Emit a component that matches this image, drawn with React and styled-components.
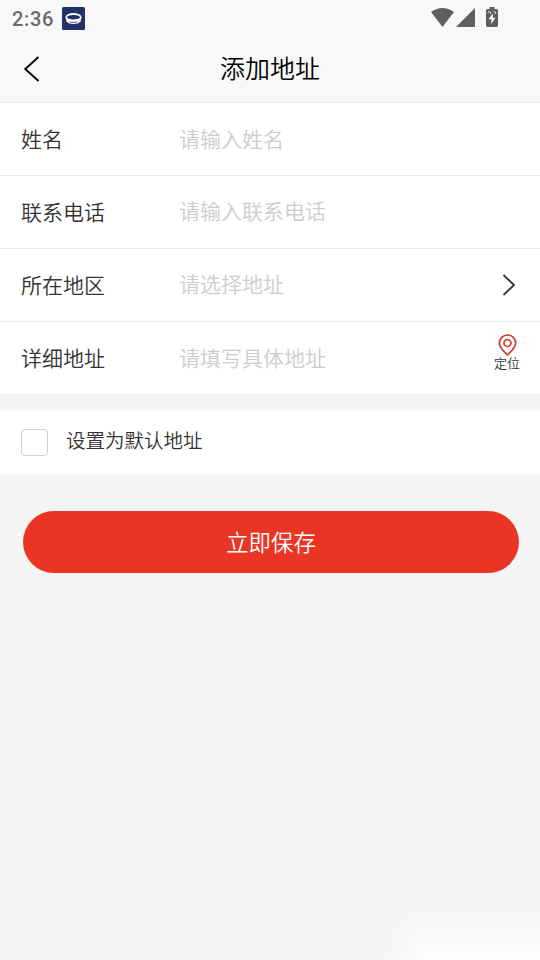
import { useState } from 'react';
import styled, { createGlobalStyle } from 'styled-components';

const campos = [
    { id: 'nombre', etiqueta: '姓名', placeholder: '请输入姓名' },
    { id: 'telefono', etiqueta: '联系电话', placeholder: '请输入联系电话' },
    { id: 'zona', etiqueta: '所在地区', placeholder: '请选择地址', accion: 'elegir' },
    { id: 'detalle', etiqueta: '详细地址', placeholder: '请填写具体地址', accion: 'ubicar' },
];

function IconosSistema(){
    return (
        <svg width="68" height="22" viewBox="431 7 68 22" fill="#5f5f5f">
            <path d="M431 12 Q442.5 4 454 12 L442.5 27 Z" />
            <path d="M475 8 V27 H456 Z" />
            <path d="M489.5 9 V7 H494.5 V9 H496.5 Q498 9 498 10.500 V25.500 Q498 27 496.500 27 H487.500 Q486 27 486 25.500 V10.500 Q486 9 487.500 9 Z" />
            <path d="M492.800 13.500 L488.500 19.300 H491.300 V24 L495.500 17.800 H492.800 Z" fill="#f8f8f8" />
            <path d="M488.300 13 V11.800 H490.500 V14 M493.500 11.800 H495.500 V14" fill="none" stroke="#dcdcdc" strokeWidth="0.900" />
        </svg>
    )
}

function IconoApp(){
    return (
        <svg width="23" height="23" viewBox="0 0 23 23">
            <rect width="23" height="23" rx="1.500" fill="#22316a" />
            <path d="M3.500 10 L4.500 14.500 Q6.500 17 11.500 17 Q16.500 17 18.500 14.500 L19.500 10 Z" fill="#fff" />
            <ellipse cx="11.500" cy="10.300" rx="8" ry="4.200" fill="#fff" />
            <ellipse cx="11.500" cy="10.200" rx="6.300" ry="2.300" fill="#22316a" />
            <path d="M7.500 15 Q11.500 15.800 15.500 15" fill="none" stroke="#22316a" strokeWidth="0.800" />
        </svg>
    )
}

function IconoPin(){
    return (
        <svg width="20" height="22" viewBox="0 0 20 22" fill="none" stroke="#cf3a2e" strokeWidth="1.700">
            <path d="M10.500 21 C7.500 18 2.300 13.800 2.300 9 A8.200 8 0 0 1 18.700 9 C18.700 13.800 13.500 18 10.500 21 Z" />
            <circle cx="10.500" cy="9" r="3.500" />
        </svg>
    )
}

function App(){
    const [valores, setValores] = useState({});
    const [porDefecto, setPorDefecto] = useState(false);

    return (
        <>
            <EstilosGlobales />
            <Pantalla>
                <BarraEstado>
                    <Hora>2:36</Hora>
                    <IconoApp />
                    <Sistema><IconosSistema /></Sistema>
                </BarraEstado>
                <Cabecera>
                    <BotonVolver aria-label="返回">
                        <svg width="18" height="28" viewBox="0 0 18 28" fill="none" stroke="#000" strokeWidth="1.800">
                            <path d="M16.500 2 L3.200 14 L16.500 26" />
                        </svg>
                    </BotonVolver>
                    <Titulo>添加地址</Titulo>
                </Cabecera>
                <Lista>
                    {campos.map((campo) => (
                        <Fila key={campo.id}>
                            <Etiqueta htmlFor={campo.id}>{campo.etiqueta}</Etiqueta>
                            <Entrada
                                id={campo.id}
                                placeholder={campo.placeholder}
                                readOnly={campo.accion === 'elegir'}
                                $subir={campo.id === 'telefono' || campo.id === 'zona'}
                                value={valores[campo.id] || ''}
                                onChange={(e) => setValores({ ...valores, [campo.id]: e.target.value })}
                            />
                            {campo.accion === 'elegir' && (
                                <Flecha width="14" height="24" viewBox="0 0 14 24">
                                    <path d="M1.500 2 L12 12 L1.500 22" />
                                </Flecha>
                            )}
                            {campo.accion === 'ubicar' && (
                                <BotonUbicar>
                                    <IconoPin />
                                    定位
                                </BotonUbicar>
                            )}
                        </Fila>
                    ))}
                </Lista>
                <FilaDefecto>
                    <Casilla
                        type="checkbox"
                        checked={porDefecto}
                        onChange={(e) => setPorDefecto(e.target.checked)}
                    />
                    <TextoDefecto>设置为默认地址</TextoDefecto>
                </FilaDefecto>
                <BotonGuardar>立即保存</BotonGuardar>
                <Brillo />
            </Pantalla>
        </>
    )
}

export default App

const EstilosGlobales = createGlobalStyle`
    * {
        box-sizing: border-box;
    }
    body {
        margin: 0;
        background: #f5f5f5;
    }
    body, input, button {
        font-family: "Noto Sans CJK SC", sans-serif;
        font-weight: 350;
    }
`

const Pantalla = styled.div`
    display: flex;
    flex-direction: column;
    width: 540px;
    height: 960px;
    overflow: hidden;
    background: #f5f5f5;
`

const BarraEstado = styled.div`
    display: flex;
    align-items: center;
    height: 36px;
    padding: 0 41px 0 12px;
    background: #f8f8f8;
`

const Hora = styled.span`
    width: 50px;
    font: 500 20px/24px Roboto, sans-serif;
    letter-spacing: 0.7px;
    color: #6c6c6c;
    padding-top: 2px;
`

const Sistema = styled.div`
    display: flex;
    margin-left: auto;
`

const Cabecera = styled.header`
    display: grid;
    grid-template-columns: 60px 1fr 60px;
    align-items: center;
    height: 67px;
    background: #f8f8f8;
    border-bottom: 1px solid #ececec;
`

const BotonVolver = styled.button`
    display: flex;
    padding: 0 0 0 22px;
    border: 0;
    background: none;
    cursor: pointer;
`

const Titulo = styled.h1`
    margin: 0 0 5px;
    font-size: 25px;
    line-height: 36px;
    font-weight: 350;
    text-align: center;
    color: #000;
`

const Lista = styled.div`
    background: #fff;
`

const Fila = styled.div`
    display: flex;
    align-items: center;
    height: 73px;
    padding: 0 20px 0 21px;
    border-bottom: 1px solid #ebebeb;
    &:last-child {
        height: 72px;
        border-bottom: 0;
    }
`

const Etiqueta = styled.label`
    width: 158px;
    margin-bottom: 2px;
    font-size: 21px;
    line-height: 30px;
    color: #333;
`

const Entrada = styled.input`
    flex: 1;
    min-width: 0;
    height: 30px;
    padding: 0;
    margin-bottom: ${(props) => (props.$subir ? '4px' : '2px')};
    border: 0;
    outline: none;
    background: none;
    font-size: 21px;
    color: #333;
    &::placeholder {
        color: #ccc;
    }
`

const Flecha = styled.svg`
    margin-right: 4px;
    fill: none;
    stroke: #333;
    stroke-width: 1.8;
`

const BotonUbicar = styled.button`
    display: flex;
    flex-direction: column;
    align-items: center;
    padding: 0;
    margin-bottom: 12px;
    border: 0;
    background: none;
    font-size: 13px;
    line-height: 14px;
    color: #333;
    cursor: pointer;
`

const FilaDefecto = styled.label`
    display: flex;
    align-items: center;
    gap: 18px;
    height: 64px;
    margin-top: 17px;
    padding: 0 21px;
    background: #fff;
`

const Casilla = styled.input`
    appearance: none;
    width: 27px;
    height: 27px;
    margin: 0 0 2px;
    border: 1px solid #d0d0d0;
    border-radius: 4px;
    background: #fff;
    &:checked {
        background: #ea3524;
    }
`

const TextoDefecto = styled.span`
    margin-bottom: 6px;
    font-size: 19.5px;
    line-height: 28px;
    color: #333;
`

const BotonGuardar = styled.button`
    flex-shrink: 0;
    height: 62px;
    margin: 36px 21px 0 23px;
    padding: 0 0 2px;
    border: 0;
    border-radius: 31px;
    background: #ea3524;
    font-size: 22.4px;
    color: #fff;
    cursor: pointer;
`

const Brillo = styled.div`
    width: 155px;
    height: 50px;
    margin: auto 0 0 auto;
    background: linear-gradient(to bottom, #f5f5f5, #f8f8f8 40%, #fdfdfd 90%);
    mask-image: linear-gradient(to right, transparent, #000 30%);
`
